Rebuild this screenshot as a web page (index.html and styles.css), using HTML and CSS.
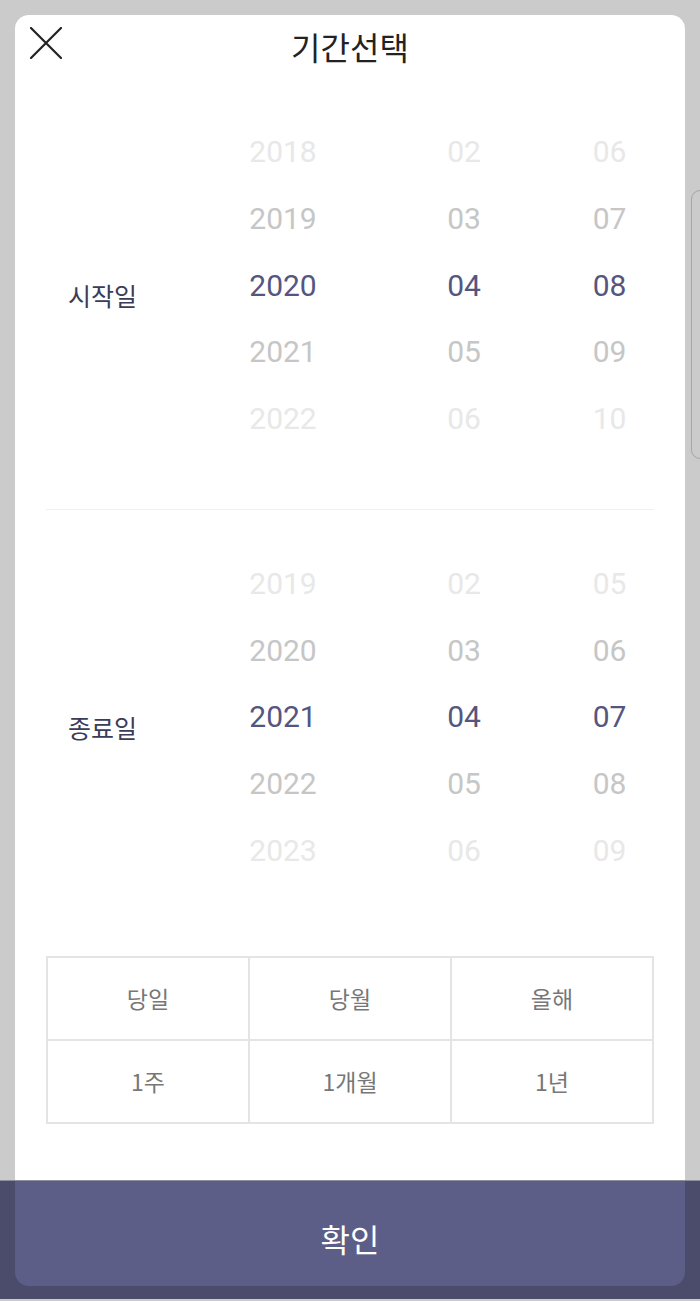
FILE: index.html
```html
<!DOCTYPE html>
<html lang="ko">
<head>
<meta charset="utf-8">
<title>기간선택</title>
<link rel="stylesheet" href="styles.css">
</head>
<body>
<div class="page">
  <div class="card">
    <header class="header">
      <button class="close" aria-label="닫기">
        <svg width="32" height="32" viewBox="0 0 32 32"><path d="M1 1 L31 31 M31 1 L1 31" stroke="#222" stroke-width="2.2" stroke-linecap="round" fill="none"/></svg>
      </button>
      <h1 class="title">기간선택</h1>
      <span></span>
    </header>

    <section class="picker picker-start">
      <div class="label">시작일</div>
      <div class="col">
        <div class="item far">2018</div>
        <div class="item near">2019</div>
        <div class="item sel">2020</div>
        <div class="item near">2021</div>
        <div class="item far">2022</div>
      </div>
      <div class="col">
        <div class="item far">02</div>
        <div class="item near">03</div>
        <div class="item sel">04</div>
        <div class="item near">05</div>
        <div class="item far">06</div>
      </div>
      <div class="col">
        <div class="item far">06</div>
        <div class="item near">07</div>
        <div class="item sel">08</div>
        <div class="item near">09</div>
        <div class="item far">10</div>
      </div>
    </section>

    <hr class="sep">

    <section class="picker picker-end">
      <div class="label">종료일</div>
      <div class="col">
        <div class="item far">2019</div>
        <div class="item near">2020</div>
        <div class="item sel">2021</div>
        <div class="item near">2022</div>
        <div class="item far">2023</div>
      </div>
      <div class="col">
        <div class="item far">02</div>
        <div class="item near">03</div>
        <div class="item sel">04</div>
        <div class="item near">05</div>
        <div class="item far">06</div>
      </div>
      <div class="col">
        <div class="item far">05</div>
        <div class="item near">06</div>
        <div class="item sel">07</div>
        <div class="item near">08</div>
        <div class="item far">09</div>
      </div>
    </section>

    <div class="quick">
      <div class="cell">당일</div>
      <div class="cell">당월</div>
      <div class="cell">올해</div>
      <div class="cell">1주</div>
      <div class="cell">1개월</div>
      <div class="cell">1년</div>
    </div>
  </div>
  <div class="handle"></div>
</div>
<footer class="footer">
  <button class="confirm">확인</button>
</footer>
</body>
</html>
```
FILE: styles.css
```css
* { box-sizing: border-box; }

html, body {
  margin: 0;
  padding: 0;
}

body {
  height: 1301px;
  background: #cbcbcb;
  display: flex;
  flex-direction: column;
  padding-bottom: 2px;
  font-family: "Noto Sans CJK KR", "Noto Sans", sans-serif;
  overflow: hidden;
}

.page {
  flex: 1;
  padding: 15px 15px 0;
  display: flex;
  position: relative;
}

.card {
  flex: 1;
  background: #fff;
  border-radius: 14px 14px 0 0;
  display: flex;
  flex-direction: column;
}

.header {
  display: grid;
  grid-template-columns: 1fr auto 1fr;
  height: 64px;
}

.close {
  border: 0;
  background: none;
  padding: 0;
  margin: 12px 0 0 15px;
  width: 32px;
  height: 32px;
  align-self: start;
  cursor: pointer;
}
.close svg { display: block; }

.title {
  margin: 0;
  font-size: 32px;
  font-weight: 400;
  line-height: 62px;
  color: #222;
}

.picker {
  display: grid;
  grid-template-columns: 157px 160px 202px 1fr;
  margin: 0 31px;
  align-items: center;
}
.picker-start { margin-top: 40px; }
.picker-end { margin-top: 41px; }

.label {
  padding-left: 22px;
  padding-top: 18px;
  font-size: 25px;
  color: #3b3c5a;
}

.col {
  display: flex;
  flex-direction: column;
  align-items: center;
}

.item {
  height: 66.75px;
  line-height: 66.75px;
  font-family: Roboto, "Liberation Sans", sans-serif;
  font-size: 30px;
}
.item.sel { color: #545680; }
.item.near { color: #c6c6c6; }
.item.far { color: #e8e8e8; }

.sep {
  margin: 56px 31px 0;
  border: 0;
  border-top: 1px solid #f1f1f1;
  height: 0;
}

.quick {
  margin: 71px 31px 0;
  display: grid;
  grid-template-columns: repeat(3, 1fr);
  border-top: 2px solid #e4e4e4;
  border-left: 2px solid #e4e4e4;
}
.cell {
  height: 83px;
  display: flex;
  align-items: center;
  justify-content: center;
  border-right: 2px solid #e4e4e4;
  border-bottom: 2px solid #e4e4e4;
  font-size: 23px;
  color: #777;
}

.handle {
  position: absolute;
  top: 190px;
  right: -12px;
  width: 21px;
  height: 269px;
  border: 1px solid #a6a6a6;
  border-radius: 9px;
}

.footer {
  height: 119px;
  background: #4b4c6c;
  border-top: 1px solid #8d8d9b;
  display: flex;
  flex-direction: column;
}

.confirm {
  margin: 0 15px;
  height: 105px;
  border: 0;
  border-radius: 0 0 14px 14px;
  background: #5d5e87;
  color: #fff;
  font-family: "Noto Sans CJK KR", "Noto Sans", sans-serif;
  font-size: 32px;
  padding: 8px 0 0;
  cursor: pointer;
}
```
